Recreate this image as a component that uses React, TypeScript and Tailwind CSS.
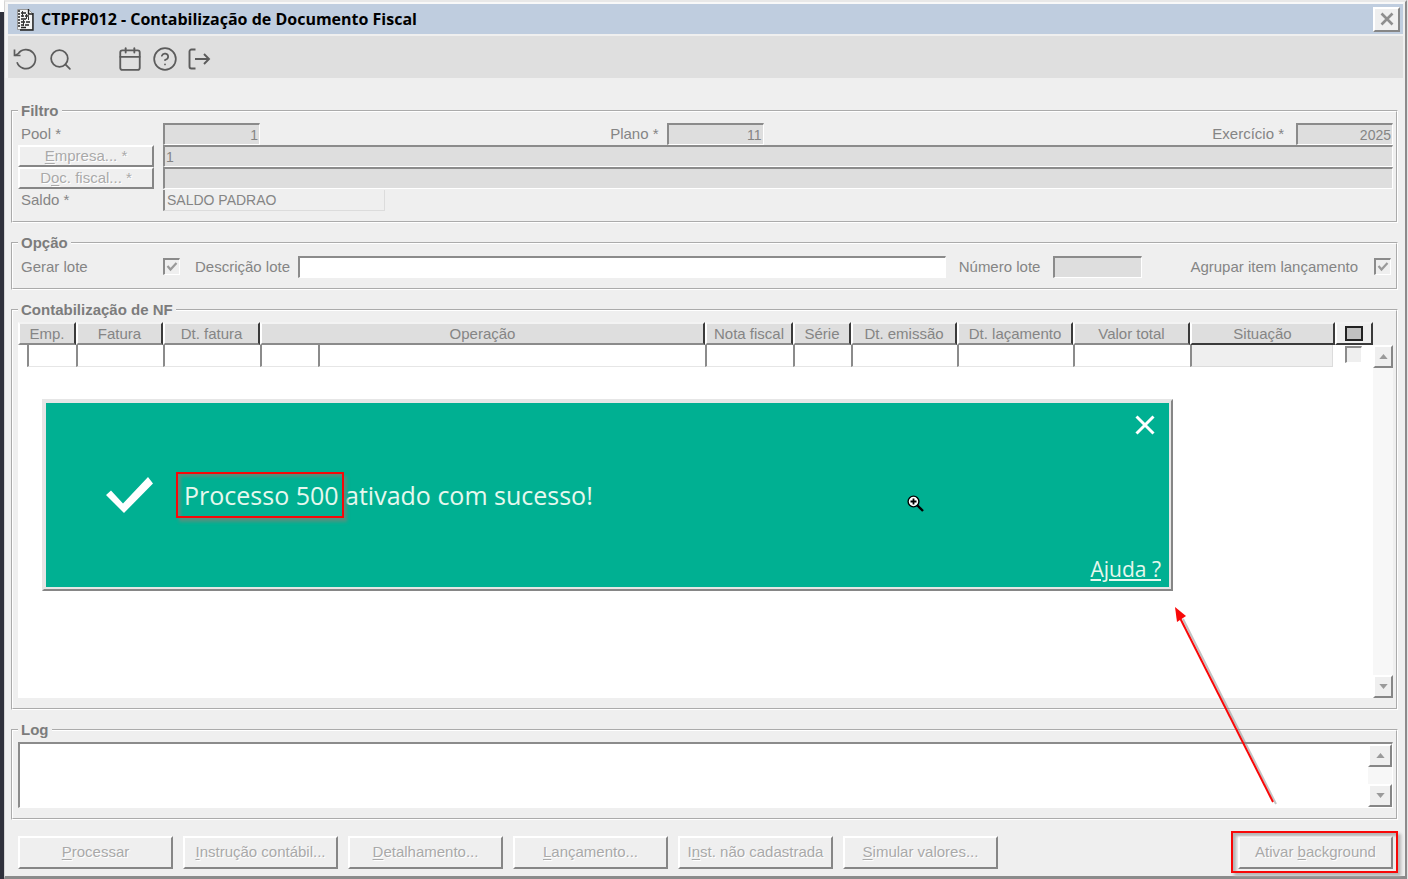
import React from 'react';
import { Calendar, CircleHelp, Search } from 'lucide-react';

const raised =
  'border-t-2 border-l-2 border-r-2 border-b-2 border-t-white border-l-white border-r-[#868686] border-b-[#868686] bg-[#efefef]';
const sunken =
  'border-t-2 border-l-2 border-r border-b border-t-[#8b8b8b] border-l-[#8b8b8b] border-r-white border-b-white';

const columns = [
  { title: 'Emp.', width: 'w-[58px]' },
  { title: 'Fatura', width: 'w-[87px]' },
  { title: 'Dt. fatura', width: 'w-[97px]' },
  { title: 'Operação', width: 'w-[58px]', span: 2 },
  { title: 'Nota fiscal', width: 'w-[88px]' },
  { title: 'Série', width: 'w-[58px]' },
  { title: 'Dt. emissão', width: 'w-[106px]' },
  { title: 'Dt. laçamento', width: 'w-[116px]' },
  { title: 'Valor total', width: 'w-[117px]' },
];

const actions = [
  ['', 'P', 'rocessar'],
  ['', 'I', 'nstrução contábil...'],
  ['', 'D', 'etalhamento...'],
  ['', 'L', 'ançamento...'],
  ['I', 'n', 'st. não cadastrada'],
  ['', 'S', 'imular valores...'],
];

function Group({ title, className = '', children }: { title: string; className?: string; children: React.ReactNode }) {
  return (
    <fieldset className={`min-w-0 border-2 border-white pt-0.5 pr-[3px] pb-[10px] pl-[5px] [border-style:groove] ${className}`}>
      <legend className="h-5 px-[3px] font-bold leading-5 text-[#7c7c7c]">{title}</legend>
      {children}
    </fieldset>
  );
}

function Mnemonic({ parts }: { parts: string[] }) {
  return (
    <span className="whitespace-pre">
      {parts[0]}
      <span className="underline underline-offset-2">{parts[1]}</span>
      {parts[2]}
    </span>
  );
}

function ActionButton({ parts }: { parts: string[] }) {
  return (
    <button
      type="button"
      className={`flex h-[33px] w-[155px] items-center justify-center pb-0.5 text-[#a9a9a9] [text-shadow:1px_1px_0_white] ${raised}`}
    >
      <Mnemonic parts={parts} />
    </button>
  );
}

function CheckBox({ id, label, checked = false }: { id: string; label?: string; checked?: boolean }) {
  return (
    <span className="grid size-[17px] shrink-0">
      <input
        id={id}
        type="checkbox"
        aria-label={label}
        defaultChecked={checked}
        disabled
        className={`col-start-1 row-start-1 size-[17px] appearance-none bg-[#efefef] ${sunken}`}
      />
      {checked && (
        <svg viewBox="0 0 17 17" className="pointer-events-none col-start-1 row-start-1 size-[17px]" fill="none">
          <path d="M4.5 8l3 3.5L13.5 5" stroke="#9a9a9a" strokeWidth="2.2" />
        </svg>
      )}
    </span>
  );
}

function ScrollButton({ up = false }: { up?: boolean }) {
  return (
    <button
      type="button"
      aria-label={up ? 'Rolar para cima' : 'Rolar para baixo'}
      className={`flex h-[23px] w-full shrink-0 items-center justify-center ${raised}`}
    >
      <svg viewBox="0 0 10 6" className="h-[5px] w-[9px]" fill="#9a9a9a">
        <path d={up ? 'M0 6L5 0l5 6z' : 'M0 0l5 6 5-6z'} />
      </svg>
    </button>
  );
}

function TitleBar() {
  return (
    <header className="flex h-[30px] items-center bg-[#bfcddf] pr-[3px] pl-2">
      <svg viewBox="0 0 18 23" className="h-[23px] w-[18px]">
        <path d="M1.5 1.5h11l4 4v16h-15z" fill="#f4f4f4" stroke="#999" />
        <path d="M12.5 1v5h4.5M17 5v17H4" fill="none" stroke="#222" strokeWidth="1.4" />
        <path
          d="M2 3h2M2 6h2M2 9h2M2 12h2M2 15h2M2 18h2M5 5h5M5 8h3M9 8h4M5 11h5M5 14h4M10 14h4M5 17h3M9 17h4M5 19.500h5"
          stroke="#222"
          strokeWidth="1.5"
        />
        <path d="M6.500 3v6M10.500 6v5M7.500 12v6M12.500 9v3" stroke="#333" />
      </svg>
      <h1 className="flex-1 pl-[7px] font-['Open_Sans',sans-serif] text-base font-bold text-black">
        CTPFP012 - Contabilização de Documento Fiscal
      </h1>
      <button type="button" aria-label="Fechar" className={`flex h-[25px] w-[27px] items-center justify-center ${raised}`}>
        <svg viewBox="0 0 14 14" className="size-[14px]" stroke="#8e8e8e" strokeWidth="2.6">
          <path d="M1.500 1.500l11 11M12.500 1.500l-11 11" />
        </svg>
      </button>
    </header>
  );
}

function Toolbar() {
  return (
    <nav className="mt-0.5 flex h-[42px] items-center bg-[#dfdfdf] pt-1 pl-[5px] text-[#5c5c5c]">
      <button type="button" aria-label="Desfazer" className="mr-[11px]">
        <svg viewBox="0 0 24 24" className="size-6" fill="none" stroke="currentColor" strokeWidth="1.700">
          <path d="M1.500 2.500v6h6" />
          <path d="M4 15.300a9.500 9.500 0 1 0 1.200-8.600L2 8.500" />
        </svg>
      </button>
      <button type="button" aria-label="Pesquisar" className="mr-[44px]">
        <Search size={25} strokeWidth={1.7} />
      </button>
      <button type="button" aria-label="Calendário" className="mr-[9px]">
        <Calendar size={26} strokeWidth={1.7} />
      </button>
      <button type="button" aria-label="Ajuda" className="mr-[9px]">
        <CircleHelp size={26} strokeWidth={1.6} />
      </button>
      <button type="button" aria-label="Sair">
        <svg viewBox="0 0 24 24" className="size-6" fill="none" stroke="currentColor" strokeWidth="1.900">
          <path d="M8.500 2.500H4.500a2 2 0 0 0-2 2v15a2 2 0 0 0 2 2h4" />
          <path d="M8 12h14M17 7l5 5-5 5" />
        </svg>
      </button>
    </nav>
  );
}

function Filter() {
  return (
    <Group title="Filtro">
      <div className="grid h-[22px] grid-cols-[242px_4fr_5fr] items-center">
        <div className="flex items-center">
          <label htmlFor="pool" className="w-[145px] pl-[3px]">Pool *</label>
          <input id="pool" defaultValue="1" disabled className={`h-[22px] w-[97px] bg-[#dedede] pr-px text-right text-sm ${sunken}`} />
        </div>
        <div className="flex items-center justify-end">
          <label htmlFor="plano" className="pr-2">Plano *</label>
          <input id="plano" defaultValue="11" disabled className={`h-[22px] w-[97px] bg-[#dedede] pr-px text-right text-sm ${sunken}`} />
        </div>
        <div className="flex items-center justify-end">
          <label htmlFor="exercicio" className="pr-3">Exercício *</label>
          <input id="exercicio" defaultValue="2025" disabled className={`h-[22px] w-[97px] bg-[#dedede] pr-px text-right text-sm ${sunken}`} />
        </div>
      </div>
      <div className="flex h-[22px] items-center">
        <button type="button" className={`mr-[9px] flex h-[22px] w-[136px] items-center justify-center text-[#a9a9a9] [text-shadow:1px_1px_0_white] ${raised}`}>
          <Mnemonic parts={['', 'E', 'mpresa... *']} />
        </button>
        <input aria-label="Empresa" defaultValue="1" disabled className={`h-[22px] min-w-0 flex-1 bg-[#dedede] pl-px text-sm ${sunken}`} />
      </div>
      <div className="flex h-[22px] items-center">
        <button type="button" className={`mr-[9px] flex h-[22px] w-[136px] items-center justify-center text-[#a9a9a9] [text-shadow:1px_1px_0_white] ${raised}`}>
          <Mnemonic parts={['D', 'o', 'c. fiscal... *']} />
        </button>
        <input aria-label="Documento fiscal" disabled className={`h-[22px] min-w-0 flex-1 bg-[#dedede] text-sm ${sunken}`} />
      </div>
      <div className="flex h-[22px] items-center">
        <label htmlFor="saldo" className="w-[145px] pl-[3px]">Saldo *</label>
        <input
          id="saldo"
          defaultValue="SALDO PADRAO"
          disabled
          className="h-[21px] w-[222px] border-r border-b border-l-2 border-r-[#dcdcdc] border-b-[#dcdcdc] border-l-[#8b8b8b] bg-[#efefef] pl-0.5 text-sm"
        />
      </div>
    </Group>
  );
}

function Options() {
  return (
    <Group title="Opção">
      <div className="flex h-[23px] items-center">
        <label htmlFor="gerar" className="w-[145px] pl-[3px]">Gerar lote</label>
        <CheckBox id="gerar" checked />
        <label htmlFor="descricao" className="pr-2 pl-[15px]">Descrição lote</label>
        <input id="descricao" className={`h-[22px] min-w-0 flex-1 bg-white text-sm ${sunken}`} />
        <label htmlFor="numero" className="px-[13px]">Número lote</label>
        <input id="numero" disabled className={`h-[22px] w-[89px] bg-[#dedede] text-sm ${sunken}`} />
        <label htmlFor="agrupar" className="pr-4 pl-12">Agrupar item lançamento</label>
        <CheckBox id="agrupar" checked />
        <span className="w-0.5" />
      </div>
    </Group>
  );
}

const headCell = 'border-t-2 border-r-2 border-b-2 border-l-2 border-t-[#f3f3f3] border-r-[#3a3a3a] border-l-white p-0 text-center font-normal';

function InvoiceTable() {
  return (
    <table className="w-full table-fixed border-separate border-spacing-0">
      <colgroup>
        {columns.map((col) => (
          <React.Fragment key={col.title}>
            <col className={col.width} />
            {col.span && <col />}
          </React.Fragment>
        ))}
        <col className="w-[145px]" />
        <col className="w-[38px]" />
      </colgroup>
      <thead>
        <tr className="h-[23px] leading-[19px]">
          {columns.map((col) => (
            <th key={col.title} colSpan={col.span} className={`border-b-[#8b8b8b] bg-[#dedede] ${headCell}`}>
              {col.title}
            </th>
          ))}
          <th className={`border-b-[#3a3a3a] bg-[#dedede] ${headCell}`}>Situação</th>
          <th className={`border-b-[#3a3a3a] bg-[#efefef] ${headCell}`}>
            <button type="button" aria-label="Marcar todos" className="mx-auto block h-[15px] w-[18px] border-2 border-[#222] bg-[#c0c0c0]" />
          </th>
        </tr>
      </thead>
      <tbody>
        <tr className="h-[22px]">
          {columns.map((col, index) => (
            <React.Fragment key={col.title}>
              <td className={index === 0 ? 'p-0 pl-[9px]' : 'p-0'}>
                <input aria-label={col.title} className="block h-[22px] w-full border-b border-l-2 border-b-[#e6e6e6] border-l-[#8b8b8b] bg-white text-sm" />
              </td>
              {col.span && (
                <td className="p-0">
                  <input aria-label="Descrição da operação" className="block h-[22px] w-full border-b border-l-2 border-b-[#e6e6e6] border-l-[#8b8b8b] bg-white text-sm" />
                </td>
              )}
            </React.Fragment>
          ))}
          <td className="p-0">
            <input aria-label="Situação" disabled className="block h-[22px] w-[143px] border-r border-b border-l-2 border-r-[#dcdcdc] border-b-[#dcdcdc] border-l-[#8b8b8b] bg-[#efefef] text-sm" />
          </td>
          <td className="p-0 pt-px pl-[10px] align-top">
            <CheckBox id="linha" label="Selecionar linha" />
          </td>
        </tr>
      </tbody>
    </table>
  );
}

function Toast() {
  return (
    <section
      role="status"
      className="absolute top-[77px] right-[220px] left-6 flex h-48 items-center border-2 border-t-[#e6e6e6] border-r-[#868686] border-b-[#868686] border-l-[#e6e6e6] bg-[#00b092] pl-[62px] font-['Open_Sans',sans-serif] text-[#e6f8ee] shadow-[inset_0_0_0_2px_#e6e6e6]"
    >
      <svg viewBox="0 0 47 36" className="h-9 w-[47px]" fill="white">
        <path d="M0 18L5 13.500l12 13L42 0l5 6.500L18 36z" />
      </svg>
      <p className="pl-[31px] text-[25px] leading-8">
        <span className="relative">
          Processo 500
          <span className="absolute -top-1.5 -right-[5px] -bottom-1.5 -left-2 border-2 border-[#f80808] shadow-[3px_4px_3px_#4f9480,inset_3px_3px_3px_#4f9480]" />
        </span>{' '}
        ativado com sucesso!
      </p>
      <button type="button" aria-label="Fechar aviso" className="absolute top-[14px] right-4">
        <svg viewBox="0 0 20 20" className="size-5" stroke="white" strokeWidth="3">
          <path d="M1.500 1.500l17 17M18.500 1.500l-17 17" />
        </svg>
      </button>
      <a href="#ajuda" className="absolute right-[10px] bottom-1.5 text-[21px] leading-7 underline underline-offset-2">
        Ajuda ?
      </a>
      {/* zoom cursor */}
      <svg viewBox="0 0 17 17" className="absolute top-[94px] right-[247px] size-[17px]">
        <path d="M10 10l6 6" stroke="black" strokeWidth="2.400" />
        <circle cx="6.500" cy="6.500" r="5.400" fill="white" stroke="black" strokeWidth="1.400" />
        <path d="M3.500 6.500h6M6.500 3.500v6" stroke="black" strokeWidth="1.800" />
      </svg>
    </section>
  );
}

export default function App() {
  return (
    <div className="flex min-h-screen bg-[#e4e4e4] pr-px font-['Liberation_Sans',Arial,sans-serif] text-[15px] leading-5 text-[#858585]">
      <div className="w-1 border-t-[12px] border-t-white bg-[#2f313c]" />
      <main className="relative flex min-w-0 flex-1 flex-col border-t-2 border-r-2 border-b-[3px] border-l border-t-[#e8e8e8] border-r-[#8b8b8b] border-b-[#8b8b8b] border-l-[#d4d4d4] bg-[#efefef]">
        <div className="border-t-2 border-r-2 border-l-[3px] border-t-[#f8f8f8] border-r-[#efefef] border-l-[#f4f4f4]">
          <TitleBar />
          <Toolbar />
        </div>
        <div className="flex flex-1 flex-col gap-[10px] pt-[23px] pr-[7px] pl-1.5">
          <Filter />
          <Options />
          <Group title="Contabilização de NF" className="flex flex-1 flex-col">
            <div className="relative flex flex-1">
              <div className="min-w-0 flex-1 bg-white">
                <InvoiceTable />
              </div>
              <div className="flex w-5 flex-col justify-between border-t-[23px] border-t-[#efefef] bg-[#f7f7f7]">
                <ScrollButton up />
                <ScrollButton />
              </div>
              <Toast />
            </div>
          </Group>
          <Group title="Log">
            <div className={`flex h-[66px] bg-white ${sunken}`}>
              <textarea aria-label="Log" className="min-w-0 flex-1 resize-none text-sm" />
              <div className="flex w-6 flex-col justify-between bg-[#f7f7f7]">
                <ScrollButton up />
                <ScrollButton />
              </div>
            </div>
          </Group>
        </div>
        <footer className="flex gap-[10px] pt-4 pr-3 pb-[7px] pl-[13px]">
          {actions.map((parts) => (
            <ActionButton key={parts[2]} parts={parts} />
          ))}
          <div className="relative ml-auto">
            <ActionButton parts={['Ativar ', 'b', 'ackground']} />
            <span className="pointer-events-none absolute -top-[5px] -right-[5px] -bottom-1 -left-[7px] border-2 border-[#f80808] shadow-[3px_3px_3px_#b5b5b5,inset_3px_3px_3px_#b5b5b5]" />
          </div>
        </footer>
        <svg viewBox="0 0 106 204" className="pointer-events-none absolute right-[125px] bottom-[66px] h-[204px] w-[106px]">
          <path d="M9 13l93 185" stroke="#888" strokeWidth="2" opacity="0.5" />
          <path d="M6 12l93 184" stroke="#f80808" strokeWidth="2" />
          <path d="M1 1l2 15 9-6z" fill="#f80808" />
        </svg>
      </main>
    </div>
  );
}
